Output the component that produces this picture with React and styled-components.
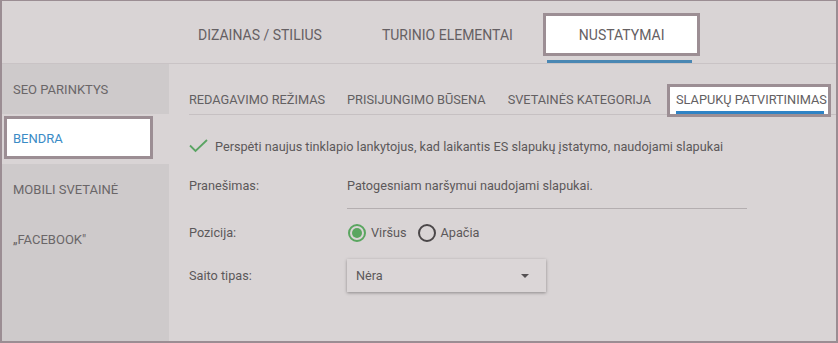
import React from "react";
import styled, { createGlobalStyle } from "styled-components";

const Global = createGlobalStyle`
  html, body { margin: 0; padding: 0; background: #d9d4d5; }
  body { font-family: Roboto, "Liberation Sans", sans-serif; }
  * { box-sizing: border-box; }
`;

const Frame = styled.div`
  width: 838px;
  height: 343px;
  border: 2px solid #9b8d93;
  border-top-width: 1px;
  background: #d9d4d5;
  display: flex;
  flex-direction: column;
  overflow: hidden;
`;

const TopBar = styled.div`
  height: 63px;
  flex: none;
  display: flex;
  border-bottom: 1px solid #c9c3c5;
  padding-left: 166px;
`;

const TopTab = styled.div`
  display: flex;
  flex-direction: column;
  align-items: stretch;
  padding-top: 12px;
`;

const TopTabBox = styled.div`
  height: 44px;
  display: flex;
  align-items: center;
  padding: 0 ${(p) => (p.$active ? "33px" : "27px")};
  border: 3px solid ${(p) => (p.$active ? "#9c8e94" : "transparent")};
  background: ${(p) => (p.$active ? "#ffffff" : "transparent")};
  font-size: 14px;
  color: #656063;
  text-transform: uppercase;
  white-space: nowrap;
`;

const TopUnderline = styled.div`
  height: 3px;
  margin: 4px 8px 0 4px;
  background: ${(p) => (p.$active ? "#4a87b3" : "transparent")};
`;

const Body = styled.div`
  flex: 1;
  display: flex;
  min-height: 0;
`;

const Sidebar = styled.div`
  width: 167px;
  flex: none;
  background: #cecacb;
  display: flex;
  flex-direction: column;
`;

const SideItem = styled.div`
  height: 50px;
  display: flex;
  align-items: center;
  padding-left: 11px;
  font-size: 13px;
  color: #6a6668;
  text-transform: uppercase;
`;

const SideActiveRow = styled.div`
  height: 50px;
  background: #d9d4d5;
  padding: 2px 16px 5px 2px;
  display: flex;
`;

const SideActiveBox = styled.div`
  flex: 1;
  display: flex;
  align-items: center;
  padding: 2px 0 0 6px;
  background: #ffffff;
  border: 3px solid #9c8e94;
  font-size: 13px;
  color: #3a8bc6;
  text-transform: uppercase;
`;

const Main = styled.div`
  flex: 1;
  padding-left: 20px;
  display: flex;
  flex-direction: column;
`;

const SubTabBar = styled.div`
  height: 51px;
  flex: none;
  display: flex;
  align-items: flex-end;
  gap: 22px;
  border-bottom: 1px solid #c6c0c2;
`;

const SubTab = styled.div`
  height: 33px;
  margin: ${(p) => (p.$active ? "0 -4px -3px -6px" : "0 0 -3px 0")};
  padding: ${(p) => (p.$active ? "0 1px 0 6px" : "3px 0")};
  border: ${(p) => (p.$active ? "3px solid #9c8e94" : "none")};
  background: ${(p) => (p.$active ? "#ffffff" : "transparent")};
  display: flex;
  flex-direction: column;
  font-size: 12.75px;
  color: #636062;
  text-transform: uppercase;
  white-space: nowrap;
`;

const SubTabLabel = styled.div`
  flex: 1;
  display: flex;
  align-items: center;
  padding-top: 1px;
`;

const SubUnderline = styled.div`
  height: 3px;
  margin-right: 3px;
  background: ${(p) => (p.$active ? "#2f83c5" : "transparent")};
`;

const CheckRow = styled.div`
  margin-top: 21px;
  height: 20px;
  display: flex;
  align-items: center;
  gap: 7px;
  font-size: 12.7px;
  color: #5c585a;
`;

const FieldRow = styled.div`
  display: flex;
  align-items: ${(p) => p.$align || "flex-start"};
  margin-top: ${(p) => p.$mt}px;
  font-size: 12.7px;
  color: #5c585a;
`;

const Label = styled.div`
  width: 158px;
  flex: none;
  line-height: 20px;
`;

const TextValue = styled.div`
  width: 400px;
  line-height: 20px;
  padding-bottom: 12px;
  border-bottom: 1px solid #b4aeb0;
`;

const RadioGroup = styled.div`
  display: flex;
  align-items: center;
  line-height: 20px;
`;

const RadioOption = styled.label`
  display: flex;
  align-items: center;
  gap: 5px;
  margin-right: 10px;
`;

const RadioCircle = styled.span`
  width: 18px;
  height: 18px;
  border-radius: 50%;
  border: 2px solid ${(p) => (p.$checked ? "#5aa660" : "#4b4749")};
  display: flex;
  align-items: center;
  justify-content: center;
  margin-left: 1px;

  &::after {
    content: "";
    width: 10px;
    height: 10px;
    border-radius: 50%;
    background: ${(p) => (p.$checked ? "#5aa660" : "transparent")};
  }
`;

const Select = styled.div`
  width: 199px;
  height: 33px;
  display: flex;
  align-items: center;
  justify-content: space-between;
  padding: 0 17px 0 9px;
  background: #dbd6d7;
  box-shadow: 0 1px 3px rgba(0, 0, 0, 0.35);
`;

const Caret = styled.span`
  width: 0;
  height: 0;
  border-left: 4px solid transparent;
  border-right: 4px solid transparent;
  border-top: 4px solid #555153;
`;

const CheckIcon = () => (
  <svg width="19" height="14" viewBox="0 0 19 14">
    <path d="M1 6.5 L6.5 12 L18 1" fill="none" stroke="#5aa463" strokeWidth="1.8" />
  </svg>
);

const topTabs = ["Dizainas / stilius", "Turinio elementai", "Nustatymai"];
const subTabs = ["Redagavimo režimas", "Prisijungimo būsena", "Svetainės kategorija", "Slapukų patvirtinimas"];

export default function App() {
  return (
    <>
      <Global />
      <Frame>
        <TopBar>
          {topTabs.map((t, i) => (
            <TopTab key={t}>
              <TopTabBox $active={i === 2}>{t}</TopTabBox>
              <TopUnderline $active={i === 2} />
            </TopTab>
          ))}
        </TopBar>
        <Body>
          <Sidebar>
            <SideItem>SEO parinktys</SideItem>
            <SideActiveRow>
              <SideActiveBox>Bendra</SideActiveBox>
            </SideActiveRow>
            <SideItem>Mobili svetainė</SideItem>
            <SideItem>„Facebook"</SideItem>
          </Sidebar>
          <Main>
            <SubTabBar>
              {subTabs.map((t, i) => (
                <SubTab key={t} $active={i === 3}>
                  <SubTabLabel>{t}</SubTabLabel>
                  <SubUnderline $active={i === 3} />
                </SubTab>
              ))}
            </SubTabBar>
            <CheckRow>
              <CheckIcon />
              Perspėti naujus tinklapio lankytojus, kad laikantis ES slapukų įstatymo, naudojami slapukai
            </CheckRow>
            <FieldRow $mt={20}>
              <Label>Pranešimas:</Label>
              <TextValue>Patogesniam naršymui naudojami slapukai.</TextValue>
            </FieldRow>
            <FieldRow $mt={14} $align="center">
              <Label>Pozicija:</Label>
              <RadioGroup>
                <RadioOption>
                  <RadioCircle $checked />
                  Viršus
                </RadioOption>
                <RadioOption>
                  <RadioCircle />
                  Apačia
                </RadioOption>
              </RadioGroup>
            </FieldRow>
            <FieldRow $mt={16} $align="center">
              <Label>Saito tipas:</Label>
              <Select>
                Nėra
                <Caret />
              </Select>
            </FieldRow>
          </Main>
        </Body>
      </Frame>
    </>
  );
}
